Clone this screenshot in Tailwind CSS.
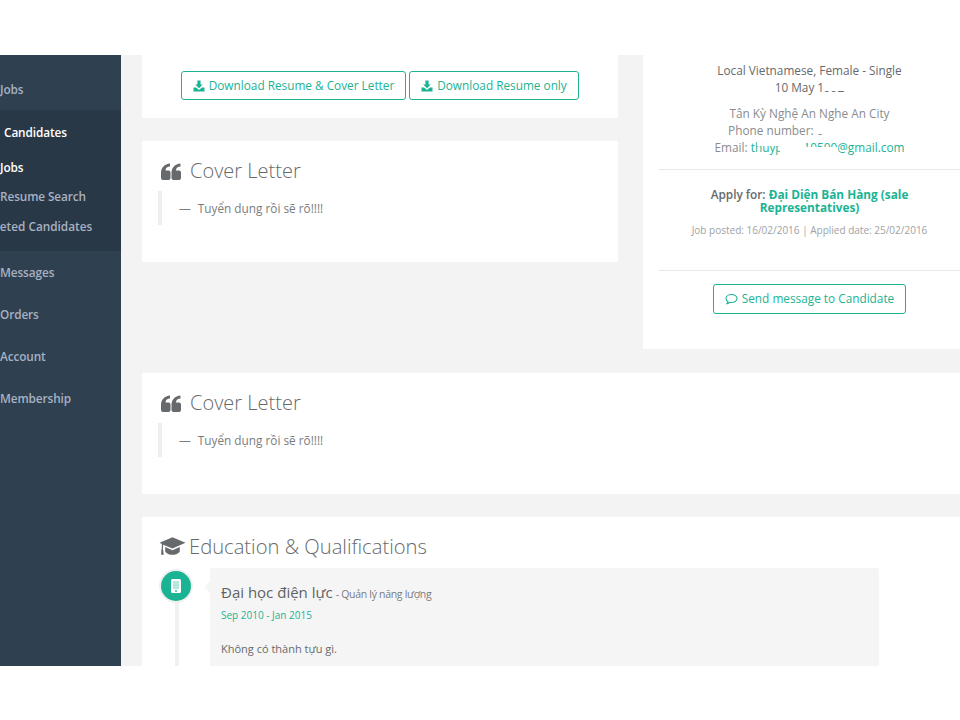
<!DOCTYPE html>
<html>
<head>
<meta charset="utf-8">
<script src="https://cdn.jsdelivr.net/npm/@tailwindcss/browser@4"></script>
</head>
<body class="bg-white font-['Open_Sans',sans-serif] text-[11.8px] text-[#676a6c]">
<div class="w-[960px] h-[720px] overflow-hidden flex flex-col bg-white">
  <div class="h-[55px] shrink-0 bg-white"></div>
  <div class="h-[611px] shrink-0 flex overflow-hidden bg-[#f3f3f4]">
    <aside class="w-[121px] shrink-0 bg-[#2f4050] overflow-hidden font-semibold text-[11.8px] tracking-[-0.1px] text-[#a7b1c2] whitespace-nowrap">
      <div class="h-[55px] flex items-center pt-[14px]">Jobs</div>
      <div class="h-[141px] bg-[#293846] pl-[4px] pt-[12px]">
        <div class="h-[20px] leading-[20px] text-white">Candidates</div>
        <div class="ml-[-4px] mt-[15px] h-[20px] leading-[20px] text-white">Jobs</div>
        <div class="ml-[-4px] mt-[9px] h-[20px] leading-[20px]">Resume Search</div>
        <div class="ml-[-23px] mt-[10px] h-[20px] leading-[20px] tracking-normal">Deleted Candidates</div>
      </div>
      <div class="h-[42px] flex items-center pt-[2px]">Messages</div>
      <div class="h-[42px] flex items-center pt-[2px]">Orders</div>
      <div class="h-[42px] flex items-center pt-[2px]">Account</div>
      <div class="h-[42px] flex items-center pt-[2px]">Membership</div>
    </aside>
    <main class="flex-1 min-w-0 pl-[21px] overflow-hidden">
      <div class="flex gap-[25px] w-[900px] items-start">
        <div class="w-[476px] shrink-0 flex flex-col gap-[23px]">
          <div class="h-[63px] bg-white flex justify-center gap-[3px] pt-[16px]">
            <a class="h-[29px] w-[225px] flex items-center justify-center gap-[4px] border border-[#1ab394] rounded-[3px] text-[#1ab394]">
              <svg viewBox="0 0 12 12" class="w-[12px] h-[12px] fill-[#1ab394]"><path d="M4.400 0.500h3.200v4h2.200L6 8.200 2.200 4.500h2.200z"/><path d="M0.500 7.500h2.600L6 10l2.900-2.500h2.600V11.500H0.500z"/></svg>
              Download Resume &amp; Cover Letter</a>
            <a class="h-[29px] w-[170px] flex items-center justify-center gap-[4px] border border-[#1ab394] rounded-[3px] text-[#1ab394]">
              <svg viewBox="0 0 12 12" class="w-[12px] h-[12px] fill-[#1ab394]"><path d="M4.400 0.500h3.200v4h2.200L6 8.200 2.200 4.500h2.200z"/><path d="M0.500 7.500h2.600L6 10l2.900-2.500h2.600V11.500H0.500z"/></svg>
              Download Resume only</a>
          </div>
          <section class="h-[121px] bg-white pl-[19px] pt-[16px]">
            <h3 class="flex items-center gap-[9px] h-[28px] text-[20px] font-light text-[#676a6c]">
              <svg viewBox="0 0 20 17" class="w-[20px] h-[17px] fill-[#676a6c]"><path d="M0 10C0 4.500 3.500 1 9 0.500V3.500C6.500 3.500 4.500 5 4.500 7.500H7.500a2 2 0 0 1 2 2V15a2 2 0 0 1-2 2H2a2 2 0 0 1-2-2Z"/><path d="M10.500 10C10.500 4.500 14 1 19.500 0.500V3.500C17 3.500 15 5 15 7.500H18a2 2 0 0 1 2 2V15a2 2 0 0 1-2 2H12.500a2 2 0 0 1-2-2Z"/></svg>
              Cover Letter</h3>
            <div class="mt-[6px] h-[34px] border-l-[4px] border-[#eeeeee] ml-[-3px] pl-[17px] leading-[34px] text-[#7a7c7e]">—<span class="ml-[7px]">Tuyển dụng rồi sẽ rõ!!!!</span></div>
          </section>
        </div>
        <div class="w-[317px] shrink-0 h-[294px] bg-white pl-[16px] text-center">
          <div class="w-[301px] pt-[7px] leading-[17px]">
            <div class="text-[#676a6c]">Local Vietnamese, Female - Single</div>
            <div class="text-[#676a6c] relative">10 May 1992<span class="absolute left-[163px] top-[0px] w-[30px] h-[12px] bg-white"></span></div>
            <div class="mt-[9px] text-[#8a8c8e]">Tân Kỳ Nghệ An Nghe An City</div>
            <div class="text-[#8a8c8e] relative">Phone number: 09123456789<span class="absolute left-[157px] top-[0px] w-[8px] h-[12px] bg-white"></span><span class="absolute left-[165px] top-[0px] w-[80px] h-[17px] bg-white"></span></div>
            <div class="text-[#8a8c8e] relative">Email: <span class="text-[#1ab394]">thuyphan10500@gmail.com</span><span class="absolute left-[98px] top-[1px] w-[23px] h-[6px] bg-white"></span><span class="absolute left-[121px] top-[0px] w-[26px] h-[17px] bg-white"></span><span class="absolute left-[147px] top-[8px] w-[32px] h-[9px] bg-white"></span></div>
          </div>
          <div class="w-[301px] mt-[13px] border-t border-[#e7eaec] pt-[18px] text-[11.8px] leading-[13px] font-semibold">
            <div class="px-[30px]"><span class="text-[#676a6c]">Apply for: </span><span class="font-bold text-[#1ab394]">Đại Diện Bán Hàng (sale Representatives)</span></div>
            <div class="mt-[8px] text-[10px] leading-[16px] font-normal text-[#a0a2a4]">Job posted: 16/02/2016 | Applied date: 25/02/2016</div>
          </div>
          <div class="w-[301px] mt-[32px] border-t border-[#e7eaec] pt-[13px] flex justify-center">
            <a class="h-[30px] w-[193px] flex items-center justify-center gap-[4px] border border-[#1ab394] rounded-[3px] text-[#1ab394]">
              <svg viewBox="0 0 13 12" class="w-[13px] h-[12px] fill-none stroke-[#1ab394] stroke-[1.1]"><path d="M6.500 1.500C3.500 1.500 1 3.200 1 5.500c0 1.300 0.800 2.400 2 3.100-0.100 0.800-0.500 1.500-1 2 1.200-0.100 2.300-0.700 3-1.300 0.500 0.100 1 0.200 1.500 0.200 3 0 5.500-1.800 5.500-4S9.500 1.500 6.500 1.500z"/></svg>
              Send message to Candidate</a>
          </div>
        </div>
      </div>
      <section class="mt-[24px] w-[850px] h-[121px] bg-white pl-[19px] pt-[16px]">
        <h3 class="flex items-center gap-[9px] h-[28px] text-[20px] font-light text-[#676a6c]">
          <svg viewBox="0 0 20 17" class="w-[20px] h-[17px] fill-[#676a6c]"><path d="M0 10C0 4.500 3.500 1 9 0.500V3.500C6.500 3.500 4.500 5 4.500 7.500H7.500a2 2 0 0 1 2 2V15a2 2 0 0 1-2 2H2a2 2 0 0 1-2-2Z"/><path d="M10.500 10C10.500 4.500 14 1 19.500 0.500V3.500C17 3.500 15 5 15 7.500H18a2 2 0 0 1 2 2V15a2 2 0 0 1-2 2H12.500a2 2 0 0 1-2-2Z"/></svg>
          Cover Letter</h3>
        <div class="mt-[6px] h-[34px] border-l-[4px] border-[#eeeeee] ml-[-3px] pl-[17px] leading-[34px] text-[#7a7c7e]">—<span class="ml-[7px]">Tuyển dụng rồi sẽ rõ!!!!</span></div>
      </section>
      <section class="mt-[23px] w-[850px] h-[160px] bg-white pl-[17px] pt-[15px]">
        <h3 class="flex items-center gap-[3px] h-[28px] text-[20.2px] font-light text-[#676a6c]">
          <svg viewBox="0 0 26 20" class="w-[27px] h-[21px] fill-[#676a6c]"><path d="M13 1L25.500 6.500 13 12 4 8.200 3.600 13.500 2.500 13.500 2.800 7.700 0.500 6.500z"/><path d="M6 10.500L13 13.500 20 10.500V15C18 17.500 15.500 18 13 18S8 17.500 6 15z"/><path d="M2.300 13h1.700l0.500 5H2z"/></svg>
          Education &amp; Qualifications</h3>
        <div class="flex mt-[8px]">
          <div class="w-[51px] shrink-0 flex flex-col items-start">
            <div class="w-[30px] h-[30px] ml-[2px] mt-[3px] rounded-full bg-[#1ab394] ring-2 ring-[#f0f0f0] flex items-center justify-center">
              <svg viewBox="0 0 10 14" class="w-[10px] h-[14px]"><rect width="10" height="14" rx="1.500" fill="#fff"/><rect x="2" y="2" width="6" height="8" fill="#b5e8dd"/><circle cx="5" cy="12" r="0.900" fill="#1ab394"/></svg>
            </div>
            <div class="w-[4px] h-[70px] ml-[16px] bg-[#f1f1f1]"></div>
          </div>
          <div class="relative w-[669px] h-[110px] bg-[#f5f5f5] rounded-[2px] pl-[11px] pt-[14px]">
            <span class="absolute left-[-4px] top-[15px] w-[8px] h-[8px] rotate-45 bg-[#f5f5f5]"></span>
            <div class="h-[20px] leading-[20px]"><span class="text-[15px] text-[#5f6264]">Đại học điện lực</span> <span class="text-[10.5px] tracking-[-0.3px] text-[#7a7c7e]">- Quản lý năng lượng</span></div>
            <div class="mt-[5px] text-[10px] leading-[16px] text-[#1ab394]">Sep 2010 - Jan 2015</div>
            <div class="mt-[17px] text-[11px] leading-[17px]">Không có thành tựu gì.</div>
          </div>
        </div>
      </section>
    </main>
  </div>
  <div class="h-[54px] shrink-0 bg-white"></div>
</div>
</body>
</html>
